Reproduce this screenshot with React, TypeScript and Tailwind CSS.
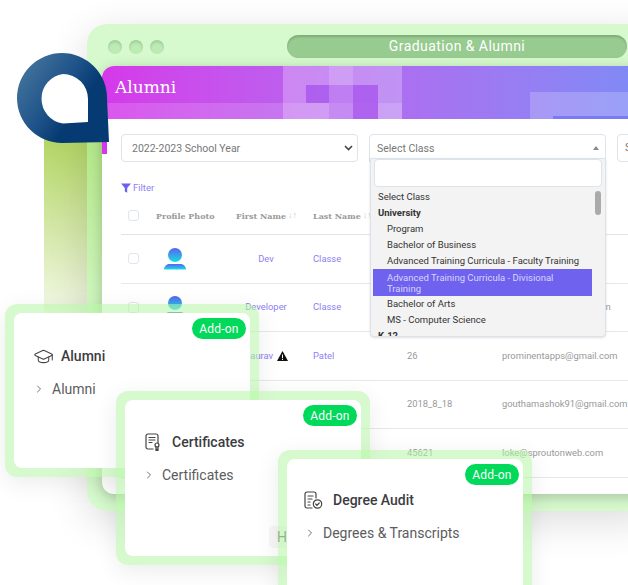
import { ChevronRight, GraduationCap } from "lucide-react";

const rows = [
  { first: "Dev", last: "Classe", id: "", email: "" },
  { first: "Developer", last: "Classe", id: "", email: "developerone@gmail.com" },
  { first: "Gaurav", warn: true, last: "Patel", id: "26", email: "prominentapps@gmail.com" },
  { first: "Goutham", last: "Ashok", id: "2018_8_18", email: "gouthamashok91@gmail.com" },
  { first: "Loke", last: "Web", id: "45621", email: "loke@sproutonweb.com" },
];

function Avatar() {
  return (
    <svg width="22" height="22" viewBox="0 0 22 22">
      <defs>
        <linearGradient id="av" x1="0" y1="0" x2="0" y2="1">
          <stop offset="0" stopColor="#5a62f2" />
          <stop offset="1" stopColor="#16dfe0" />
        </linearGradient>
      </defs>
      <circle cx="11" cy="7" r="7" fill="url(#av)" />
      <path d="M0 21.500C0 18 3 16 6 16h10c3 0 6 2 6 5.500z" fill="url(#av)" />
    </svg>
  );
}

function CertIcon() {
  return (
    <svg width="16" height="18" viewBox="0 0 16 18" fill="none" stroke="#444" strokeWidth="1.200" strokeLinecap="round" className="ml-[2px]">
      <path d="M8 16H3a2 2 0 0 1-2-2V3a2 2 0 0 1 2-2h8a2 2 0 0 1 2 2v7" />
      <path d="M4 4.500h6M4 7h6M4 9.500h3" />
      <circle cx="12" cy="12" r="2" />
      <path d="M11 14v3l1-.7 1 .7v-3" />
    </svg>
  );
}

function AuditIcon() {
  return (
    <svg width="19" height="19" viewBox="0 0 19 19" fill="none" stroke="#444" strokeWidth="1.200" strokeLinecap="round">
      <path d="M8 17H3a2 2 0 0 1-2-2V3a2 2 0 0 1 2-2h7a2 2 0 0 1 2 2v4" />
      <path d="M4 5h5M4 8h4M4 11h2M4 14h2" />
      <circle cx="13.500" cy="13" r="4.200" />
      <path d="M11.700 13l1.300 1.300 2.200-2.300" />
    </svg>
  );
}

function AddOnCard({
  pos,
  inner,
  iconWidth,
  icon,
  title,
  item,
}: {
  pos: string;
  inner: string;
  iconWidth: string;
  icon: React.ReactNode;
  title: string;
  item: string;
}) {
  return (
    <div className={`absolute w-[254px] rounded-xl bg-[#b4f5a4]/55 p-[9px] shadow-[0_6px_24px_rgba(0,0,0,0.08)] ${pos}`}>
      <div className={`relative h-full rounded-lg bg-white ${inner}`}>
        <span className="absolute right-[4px] top-[5px] flex h-[21px] w-[54px] items-center justify-center rounded-full bg-[#00d95a] text-[12px] tracking-[0.2px] text-white">
          Add-on
        </span>
        <div className="flex h-[20px] items-center font-medium text-[14px] text-[#3c3c40]">
          <span className={`flex items-center ${iconWidth}`}>{icon}</span>
          {title}
        </div>
        <div className="mt-[13px] flex h-[20px] items-center text-[14px] text-[#5c5c60]">
          <ChevronRight size={12} strokeWidth={1.500} className="mr-[7px] text-[#444]" />
          {item}
        </div>
      </div>
    </div>
  );
}

export default function App() {
  return (
    <div className="relative h-[585px] w-[628px] overflow-hidden bg-white font-['Roboto',sans-serif]">
      {/* Green bar behind the window */}
      <div className="absolute left-[44px] top-[110px] h-[235px] w-[70px] rounded-tl-2xl bg-gradient-to-b from-[#a8d04e] to-white/0" />

      {/* App window */}
      <div className="absolute left-[87px] top-[24px] h-[487px] w-[570px] rounded-[20px] bg-[#b4f5a4]/55 shadow-[0_10px_40px_rgba(0,0,0,0.14)]">
        <div className="flex h-[42px] items-center pl-[21px]">
          <div className="mt-[3px] flex gap-[7px]">
            <span className="h-[14px] w-[14px] rounded-full bg-[#bcecb4] shadow-[inset_0_2px_3px_rgba(0,0,0,0.15)]" />
            <span className="h-[14px] w-[14px] rounded-full bg-[#bcecb4] shadow-[inset_0_2px_3px_rgba(0,0,0,0.15)]" />
            <span className="h-[14px] w-[14px] rounded-full bg-[#bcecb4] shadow-[inset_0_2px_3px_rgba(0,0,0,0.15)]" />
          </div>
          <div className="ml-[123px] mt-[2px] flex h-[23px] w-[340px] items-center justify-center rounded-full bg-[#97cb8f] text-[14px] tracking-[0.45px] text-white shadow-[inset_0_2px_2px_rgba(0,0,0,0.15)]">
            Graduation &amp; Alumni
          </div>
        </div>

        <div className="relative ml-[15px] h-[428px] overflow-hidden rounded-l-xl bg-white shadow-[0_3px_14px_rgba(0,0,0,0.22)]">
          {/* Header */}
          <div className="relative flex h-[53px] items-center bg-gradient-to-r from-[#d538ea] to-[#7a8cf6] pb-[10px] pl-[13px] font-['DejaVu_Serif',serif] text-[17px] text-white">
            <span className="absolute bottom-0 left-0 h-[16px] w-[300px] bg-white/15" />
            <span className="absolute left-[181px] top-0 h-[53px] w-[119px] bg-white/25" />
            <span className="absolute left-[204px] top-[19px] h-[18px] w-[23px] bg-[#a855ee]/80" />
            <span className="absolute left-[227px] top-0 h-[19px] w-[24px] bg-white/15" />
            <span className="absolute left-[227px] top-[19px] h-[34px] w-[24px] bg-[#a855ee]/25" />
            <span className="absolute left-[251px] top-[19px] h-[34px] w-[25px] bg-[#a855ee]/80" />
            <span className="absolute left-[428px] top-[26px] h-[27px] w-[120px] bg-white/20" />
            <span className="absolute left-[451px] top-[50px] h-[3px] w-[100px] bg-[#7a7af5]" />
            <span className="relative">Alumni</span>
          </div>
          <span className="absolute left-0 top-[53px] h-[35px] w-[5px] bg-[#d538ea]" />

          {/* Filters */}
          <div className="flex gap-[11px] pl-[19px] pt-[15px] text-[10.500px] text-[#777]">
            <div className="flex h-[28px] w-[237px] shrink-0 items-center justify-between rounded border border-[#dde3ea] pl-[10px] pr-[4px]">
              <span className="mt-[2px]">2022-2023 School Year</span>
              <svg width="9" height="6" viewBox="0 0 9 6" fill="none" stroke="#444" strokeWidth="1.600">
                <path d="M1 1l3.500 3.500L8 1" />
              </svg>
            </div>
            <div className="flex h-[28px] w-[237px] shrink-0 items-start justify-between rounded-t border border-[#dde3ea] pl-[7px] pr-[6px] pt-[6px]">
              Select Class
              <span className="mt-[5px] h-0 w-0 border-x-[3px] border-b-[4px] border-x-transparent border-b-[#888]" />
            </div>
            <div className="flex h-[28px] w-[100px] shrink-0 items-center rounded border border-[#dde3ea] pl-[7px]">Select</div>
          </div>

          {/* Table */}
          <div className="ml-[19px] mt-[19px] w-[520px]">
            <div className="flex h-[14px] items-center gap-[2px] text-[9.500px] text-[#8f80f5]">
              <svg width="10" height="10" viewBox="0 0 10 10" fill="#6d62ee">
                <path d="M0 .5h10L6.200 5v4.800L3.800 8.500V5z" />
              </svg>
              Filter
            </div>
            <div className="mt-[2px] flex h-[38px] items-center border-b border-[#e4e4e4] font-['DejaVu_Serif',serif] text-[8px] font-bold text-[#999]">
              <span className="ml-[7px] h-[11px] w-[11px] rounded-[3px] border border-[#dfe5ec]" />
              <span className="ml-[17px] w-[80px]">Profile Photo</span>
              <span className="flex w-[77px] items-center">
                First Name <span className="ml-[2px] font-['Roboto',sans-serif] text-[9px] font-normal text-[#ccc]">↓↑</span>
              </span>
              <span className="flex w-[94px] items-center">
                Last Name <span className="ml-[2px] font-['Roboto',sans-serif] text-[9px] font-normal text-[#ccc]">↓↑</span>
              </span>
            </div>
            {rows.map((r) => (
              <div key={r.first} className="flex h-[48.500px] items-center border-b border-[#e8e8e8] text-[9.400px] text-[#999]">
                <span className="ml-[7px] h-[11px] w-[11px] rounded-[3px] border border-[#dfe5ec]" />
                <span className="ml-[25px] w-[72px]">
                  <Avatar />
                </span>
                <span className="flex w-[77px] items-center justify-start pl-[8px] text-[#8f80f5]">
                  <span className="flex w-[44px] items-center justify-center gap-[4px]">
                    {r.first}
                    {r.warn && (
                      <svg width="11" height="10" viewBox="0 0 11 10" className="shrink-0">
                        <path d="M5.500 0L11 10H0z" fill="#111" />
                        <path d="M5 3.500h1V7H5zM5 7.800h1V9H5z" fill="#fff" />
                      </svg>
                    )}
                  </span>
                </span>
                <span className="w-[94px] text-[#8f80f5]">{r.last}</span>
                <span className="w-[95px]">{r.id}</span>
                <span className="whitespace-nowrap">{r.email}</span>
              </div>
            ))}
          </div>

          {/* Open dropdown */}
          <div className="absolute left-[268px] top-[92px] h-[179px] w-[236px] overflow-hidden rounded-b border border-[#dde3ea] bg-[#f3f3f3] text-[9.500px] text-[#333] shadow-sm">
            <div className="mx-[3px] h-[28px] rounded border border-[#dde3ea] bg-white" />
            <div className="ml-[2px] mt-[2px] flex">
              <ul className="w-[219px] leading-[16px]">
                <li className="pl-[5px]">Select Class</li>
                <li className="pl-[5px] font-bold">University</li>
                <li className="pl-[14px]">Program</li>
                <li className="pl-[14px]">Bachelor of Business</li>
                <li className="pl-[14px]">Advanced Training Curricula - Faculty Training</li>
                <li className="bg-[#6e62ef] py-[2.500px] pl-[14px] leading-[11px] text-[#d9d5fb]">
                  Advanced Training Curricula - Divisional
                  <br />
                  Training
                </li>
                <li className="pl-[14px]">Bachelor of Arts</li>
                <li className="pl-[14px]">MS - Computer Science</li>
                <li className="pl-[5px] font-bold">K-12</li>
              </ul>
              <span className="ml-[3px] mt-[2px] h-[24px] w-[6px] rounded-full bg-[#aaa]" />
            </div>
          </div>
        </div>
      </div>

      {/* Logo */}
      <svg className="absolute left-[17px] top-[53px]" width="93" height="91" viewBox="0 0 93 91">
        <defs>
          <linearGradient id="logo" x1="0" y1="0.15" x2="0.9" y2="0.75">
            <stop offset="0" stopColor="#47779f" />
            <stop offset="0.5" stopColor="#1d5288" />
            <stop offset="0.75" stopColor="#063a72" />
          </linearGradient>
        </defs>
        <path d="M45 0A45 45 0 0 0 45 90L92 89 90 45A45 45 0 0 0 45 0Z" fill="url(#logo)" />
        <path d="M46 21A25 25 0 0 0 46 70.500L71 69V46A25 25 0 0 0 46 21Z" fill="#fff" />
      </svg>

      <AddOnCard
        pos="left-[5px] top-[304px] h-[173px]"
        inner="pl-[19px] pt-[33px]"
        iconWidth="w-[28px]"
        icon={<GraduationCap size={21} strokeWidth={1.200} color="#444" />}
        title="Alumni"
        item="Alumni"
      />
      <AddOnCard
        pos="left-[116px] top-[391px] h-[174px]"
        inner="pl-[18px] pt-[32px]"
        iconWidth="w-[29px]"
        icon={<CertIcon />}
        title="Certificates"
        item="Certificates"
      />
      {/* Help button peeking out from under the last card */}
      <div className="absolute left-[269px] top-[526px] flex h-[22px] w-[20px] items-center rounded-l bg-[#f7f7f7] pl-[8px] text-[14px] text-[#666]">
        He
      </div>
      <AddOnCard
        pos="left-[278px] top-[450px] h-[160px]"
        inner="pl-[17px] pt-[31px]"
        iconWidth="w-[29px]"
        icon={<AuditIcon />}
        title="Degree Audit"
        item="Degrees & Transcripts"
      />
    </div>
  );
}
